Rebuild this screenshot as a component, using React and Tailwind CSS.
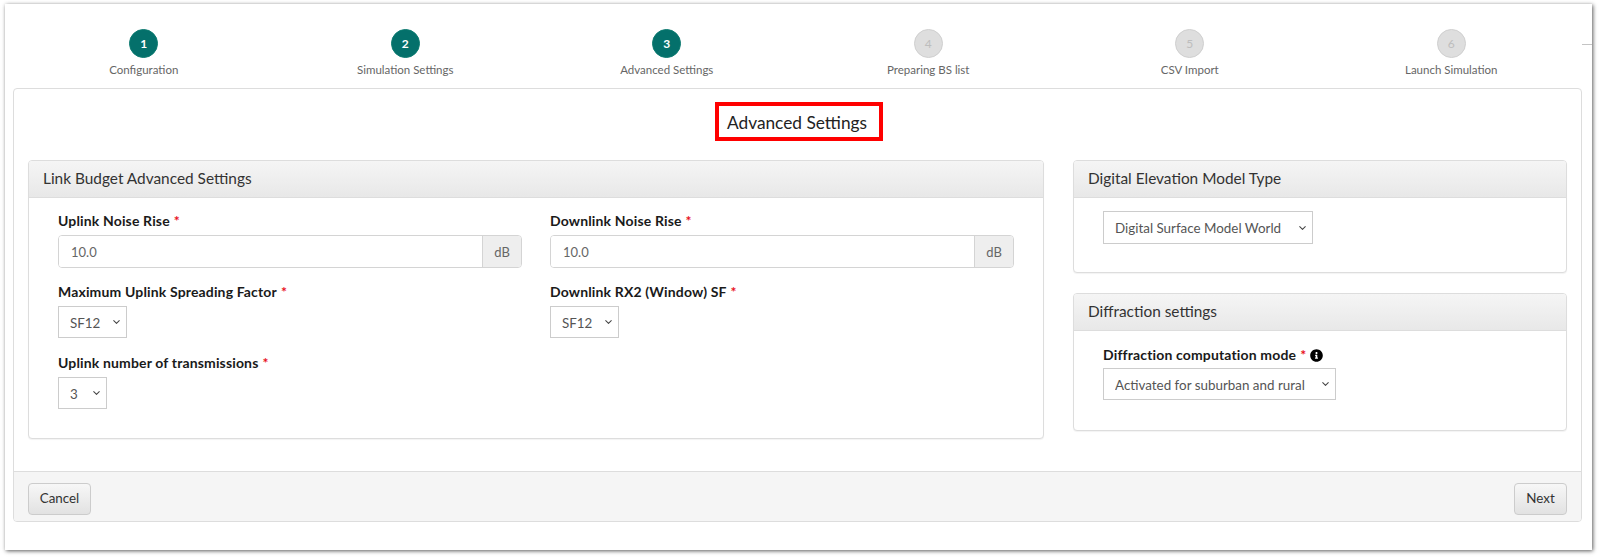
import React from "react";
import { FaInfoCircle } from "react-icons/fa";
import { ChevronDown } from "lucide-react";

const steps = [
  ["1", "Configuration", true],
  ["2", "Simulation Settings", true],
  ["3", "Advanced Settings", true],
  ["4", "Preparing BS list", false],
  ["5", "CSV Import", false],
  ["6", "Launch Simulation", false],
];

function Step({ n, label, active }) {
  return (
    <div className="flex flex-col items-center">
      <div
        className={
          active
            ? "flex h-[29px] w-[29px] items-center justify-center rounded-full border border-[#0b7a70] bg-[#04706b] text-[12px] font-bold text-white"
            : "flex h-[29px] w-[29px] items-center justify-center rounded-full border border-[#cfcfcf] bg-[#dedede] text-[12px] text-[#bdbdbd]"
        }
      >
        {n}
      </div>
      <div className="mt-[3px] text-[11.5px] leading-[18px] text-[#666]">{label}</div>
    </div>
  );
}

function Panel({ title, className, children }) {
  return (
    <section className={"overflow-hidden rounded-[4px] border border-[#dddddd] bg-white shadow-[0_1px_1px_rgba(0,0,0,0.05)] " + className}>
      <h3 className="flex h-[37px] items-center border-b border-[#dddddd] bg-gradient-to-b from-[#f5f5f5] to-[#e8e8e8] px-[14px] text-[15.4px] font-normal text-[#333]">
        {title}
      </h3>
      {children}
    </section>
  );
}

function Label({ children, extra }) {
  return (
    <label className="flex h-[18px] items-center text-[14px] font-bold leading-[18px] tracking-[0.15px] text-[#1a1a1a]">
      <span>{children}</span>
      <span className="ml-1 text-[#e8101c]">*</span>
      {extra}
    </label>
  );
}

function UnitInput() {
  return (
    <div className="mt-[5px] flex h-[33px] overflow-hidden rounded-[4px] border border-[#d4d4d4]">
      <input
        readOnly
        value="10.0"
        className="min-w-0 flex-1 bg-white px-3 pt-[2px] text-[13px] text-[#666] outline-none"
      />
      <span className="flex w-[39px] items-center justify-center border-l border-[#d4d4d4] bg-[#eeeeee] pt-[2px] text-[13px] text-[#666]">
        dB
      </span>
    </div>
  );
}

function Select({ value, className }) {
  return (
    <div className={"relative " + className}>
      <select
        defaultValue={value}
        className="block h-full w-full appearance-none border border-[#cccccc] bg-white pl-[11px] pt-[2px] text-[13.4px] text-[#555] outline-none"
      >
        <option>{value}</option>
      </select>
      <ChevronDown
        size={11}
        strokeWidth={2.2}
        className="pointer-events-none absolute right-[5px] top-1/2 -translate-y-1/2 text-[#444]"
      />
    </div>
  );
}

export default function App() {
  return (
    <div className="h-[558px] w-[1600px] bg-white pl-[5px] pt-[4px] font-['Lato','Liberation_Sans',sans-serif]">
      <div className="relative h-[546px] w-[1587px] bg-white px-[8px] shadow-[1px_1px_4px_rgba(0,0,0,0.65)]">
        <div className="absolute right-0 top-[40px] h-px w-[10px] bg-[#c4c4c4]" />
        <div className="grid h-[84px] w-[1569px] grid-cols-6 pt-[25px]">
          {steps.map(([n, label, active]) => (
            <Step key={n} n={n} label={label} active={active} />
          ))}
        </div>
        <div className="flex h-[434px] w-[1569px] flex-col overflow-hidden rounded-[4px] border border-[#dddddd]">
          <div className="flex-1 px-[14px]">
            <div className="mt-[13px] flex justify-center pl-[2px]">
              <h2 className="flex h-[39px] w-[168px] items-center justify-center border-4 border-[#ff0000] pr-[3px] pt-[2px] text-[17.3px] font-normal text-[#222]">
                Advanced Settings
              </h2>
            </div>
            <div className="mt-[19px] grid grid-cols-[1016px_494px] gap-x-[29px]">
              <Panel title="Link Budget Advanced Settings" className="h-[279px]">
                <div className="grid grid-cols-2 gap-x-[28px] px-[29px] pt-[14px]">
                  <div>
                    <Label>Uplink Noise Rise</Label>
                    <UnitInput />
                  </div>
                  <div>
                    <Label>Downlink Noise Rise</Label>
                    <UnitInput />
                  </div>
                  <div className="mt-[15px]">
                    <Label>Maximum Uplink Spreading Factor</Label>
                    <Select value="SF12" className="mt-[5px] h-[32px] w-[69px]" />
                  </div>
                  <div className="mt-[15px]">
                    <Label>Downlink RX2 (Window) SF</Label>
                    <Select value="SF12" className="mt-[5px] h-[32px] w-[69px]" />
                  </div>
                  <div className="col-span-2 mt-[16px]">
                    <Label>Uplink number of transmissions</Label>
                    <Select value="3" className="mt-[5px] h-[32px] w-[49px]" />
                  </div>
                </div>
              </Panel>
              <div className="flex flex-col gap-[20px]">
                <Panel title="Digital Elevation Model Type" className="h-[113px]">
                  <div className="px-[29px] pt-[13px]">
                    <Select value="Digital Surface Model World" className="h-[33px] w-[210px]" />
                  </div>
                </Panel>
                <Panel title="Diffraction settings" className="h-[138px]">
                  <div className="px-[29px] pt-[15px]">
                    <Label extra={<FaInfoCircle className="ml-[4px] text-[13px] text-black" />}>
                      Diffraction computation mode
                    </Label>
                    <Select value="Activated for suburban and rural" className="mt-[4px] h-[32px] w-[233px]" />
                  </div>
                </Panel>
              </div>
            </div>
          </div>
          <div className="flex h-[50px] items-center justify-between border-t border-[#dddddd] bg-[#f5f5f5] px-[14px] pt-[4px]">
            <button className="h-[32px] w-[63px] rounded-[4px] border border-[#cccccc] bg-gradient-to-b from-[#f7f7f7] to-[#e2e2e2] text-[13.4px] text-[#333]">
              Cancel
            </button>
            <button className="h-[32px] w-[53px] rounded-[4px] border border-[#cccccc] bg-gradient-to-b from-[#f7f7f7] to-[#e2e2e2] text-[13.4px] text-[#333]">
              Next
            </button>
          </div>
        </div>
      </div>
    </div>
  );
}
